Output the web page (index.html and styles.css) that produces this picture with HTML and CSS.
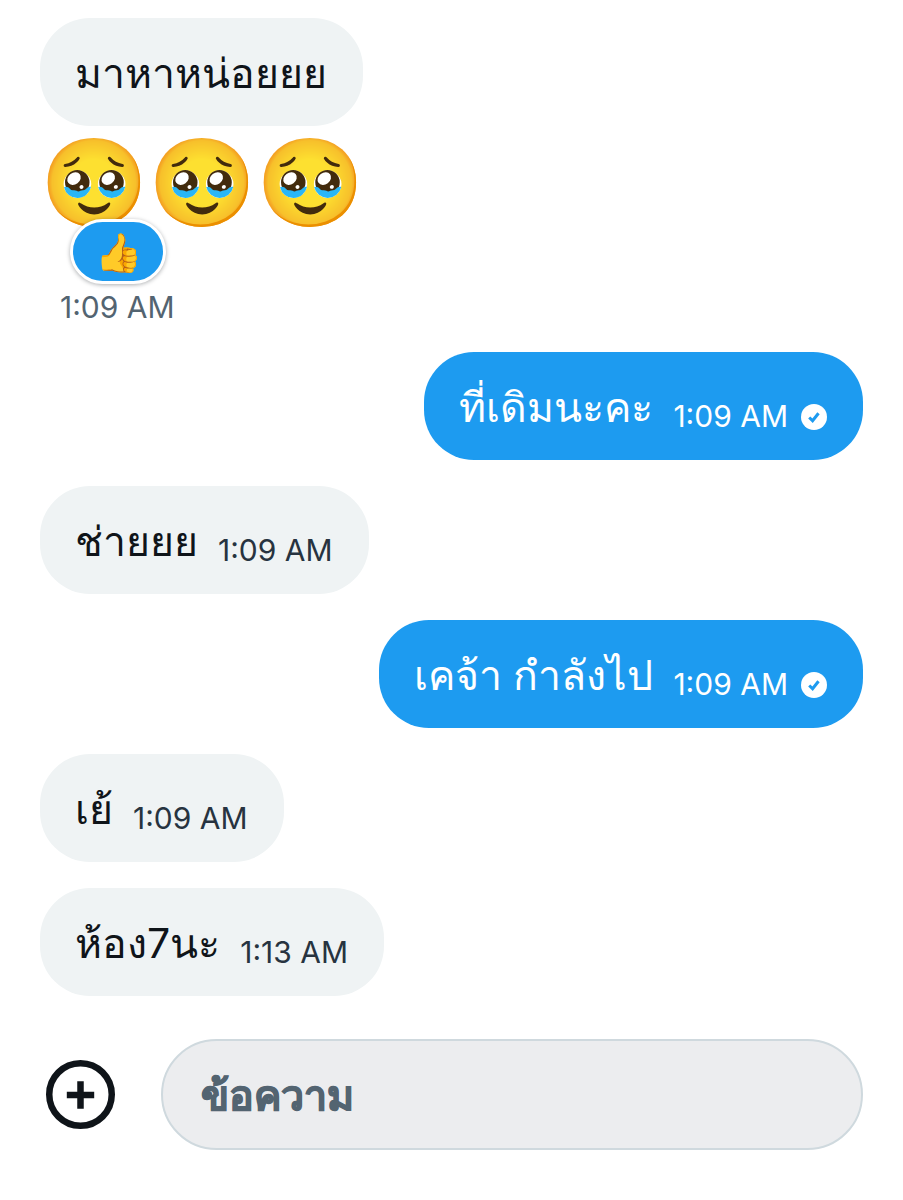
FILE: index.html
```html
<!DOCTYPE html>
<html lang="th">
<head>
<meta charset="utf-8">
<meta name="viewport" content="width=device-width, initial-scale=1">
<title>ข้อความ</title>
<link rel="stylesheet" href="styles.css">
</head>
<body>
<main class="chat">
  <div class="group">
    <div class="bubble"><p class="text">มาหาหน่อยยย</p></div>
    <div class="sticker">
      <p class="emojis"><span>🥹</span><span>🥹</span><span>🥹</span></p>
      <button class="reaction" type="button">👍</button>
    </div>
    <time class="time time-below">1:09 AM</time>
  </div>

  <div class="bubble sent">
    <p class="text">ที่เดิมนะคะ</p>
    <time class="time">1:09 AM</time>
    <svg class="check" viewBox="0 0 26 26" aria-hidden="true"><circle cx="13" cy="13" r="13"/><path d="M8.200 13.500l3.400 3.200 5.900-7.500"/></svg>
  </div>

  <div class="bubble">
    <p class="text">ช่ายยย</p>
    <time class="time">1:09 AM</time>
  </div>

  <div class="bubble sent">
    <p class="text">เคจ้า กำลังไป</p>
    <time class="time">1:09 AM</time>
    <svg class="check" viewBox="0 0 26 26" aria-hidden="true"><circle cx="13" cy="13" r="13"/><path d="M8.200 13.500l3.400 3.200 5.900-7.500"/></svg>
  </div>

  <div class="bubble">
    <p class="text">เย้</p>
    <time class="time">1:09 AM</time>
  </div>

  <div class="bubble">
    <p class="text">ห้อง7นะ</p>
    <time class="time">1:13 AM</time>
  </div>
</main>

<form class="composer">
  <button class="add" type="button" aria-label="เพิ่ม">
    <svg viewBox="0 0 68 68" aria-hidden="true"><circle cx="34" cy="34" r="30.800"/><path d="M34 21v27M20.500 34.500h27"/></svg>
  </button>
  <input class="field" type="text" placeholder="ข้อความ" aria-label="ข้อความ">
</form>
</body>
</html>
```
FILE: styles.css
```css
* { box-sizing: border-box; }

body {
  margin: 0;
  background: #fff;
  color: #0f1419;
  font-family: Inter, "Noto Sans", sans-serif;
}

p { margin: 0; }

.chat {
  display: flex;
  flex-direction: column;
  align-items: flex-start;
  gap: 26px;
  padding: 18px 40px 0;
}

.group {
  display: flex;
  flex-direction: column;
  align-items: flex-start;
}

.bubble {
  display: flex;
  align-items: flex-end;
  min-height: 108px;
  padding: 27px 36px 25px 35px;
  border-radius: 50px;
  background: #eff3f4;
}

.sent {
  align-self: flex-end;
  background: #1d9bf0;
  color: #fff;
}

.text {
  font-size: 41px;
  line-height: 56px;
}

.time {
  margin-left: 20px;
  font-size: 30px;
  line-height: 38px;
  color: #273340;
}

.sent .time { color: #fff; }

.time-below {
  margin-top: 4px;
  color: #536471;
}

.check {
  width: 26px;
  height: 26px;
  margin: 0 0 5px 13px;
  fill: #fff;
}

.check path {
  fill: none;
  stroke: #1d9bf0;
  stroke-width: 3;
}

.sticker {
  position: relative;
  padding: 8px 0 54px 0;
}

.emojis {
  display: flex;
  font-size: 87px;
  line-height: 96px;
}

.reaction {
  position: absolute;
  left: 30px;
  bottom: 0;
  width: 96px;
  height: 65px;
  padding: 0;
  border: 3px solid #fff;
  border-radius: 33px;
  background: #1d9bf0;
  box-shadow: 0 1px 4px rgba(15, 20, 25, 0.35);
  font: 38px/56px Inter, sans-serif;
}

.composer {
  display: flex;
  align-items: center;
  gap: 46px;
  padding: 43px 40px 50px 46px;
}

.add {
  width: 69px;
  height: 69px;
  padding: 0;
  border: 0;
  background: none;
}

.add svg {
  display: block;
  width: 100%;
  fill: none;
  stroke: #0f1419;
  stroke-width: 6.4;
}

.field {
  flex: 1;
  min-width: 0;
  height: 111px;
  padding: 0 38px;
  border: 2px solid #cfd9de;
  border-radius: 56px;
  background: #ecedef;
  color: #0f1419;
  font: 900 41px/56px Inter, "Noto Sans", sans-serif;
}

.field::placeholder {
  color: #536471;
  opacity: 1;
  -webkit-text-stroke: 1px #536471;
}
```
